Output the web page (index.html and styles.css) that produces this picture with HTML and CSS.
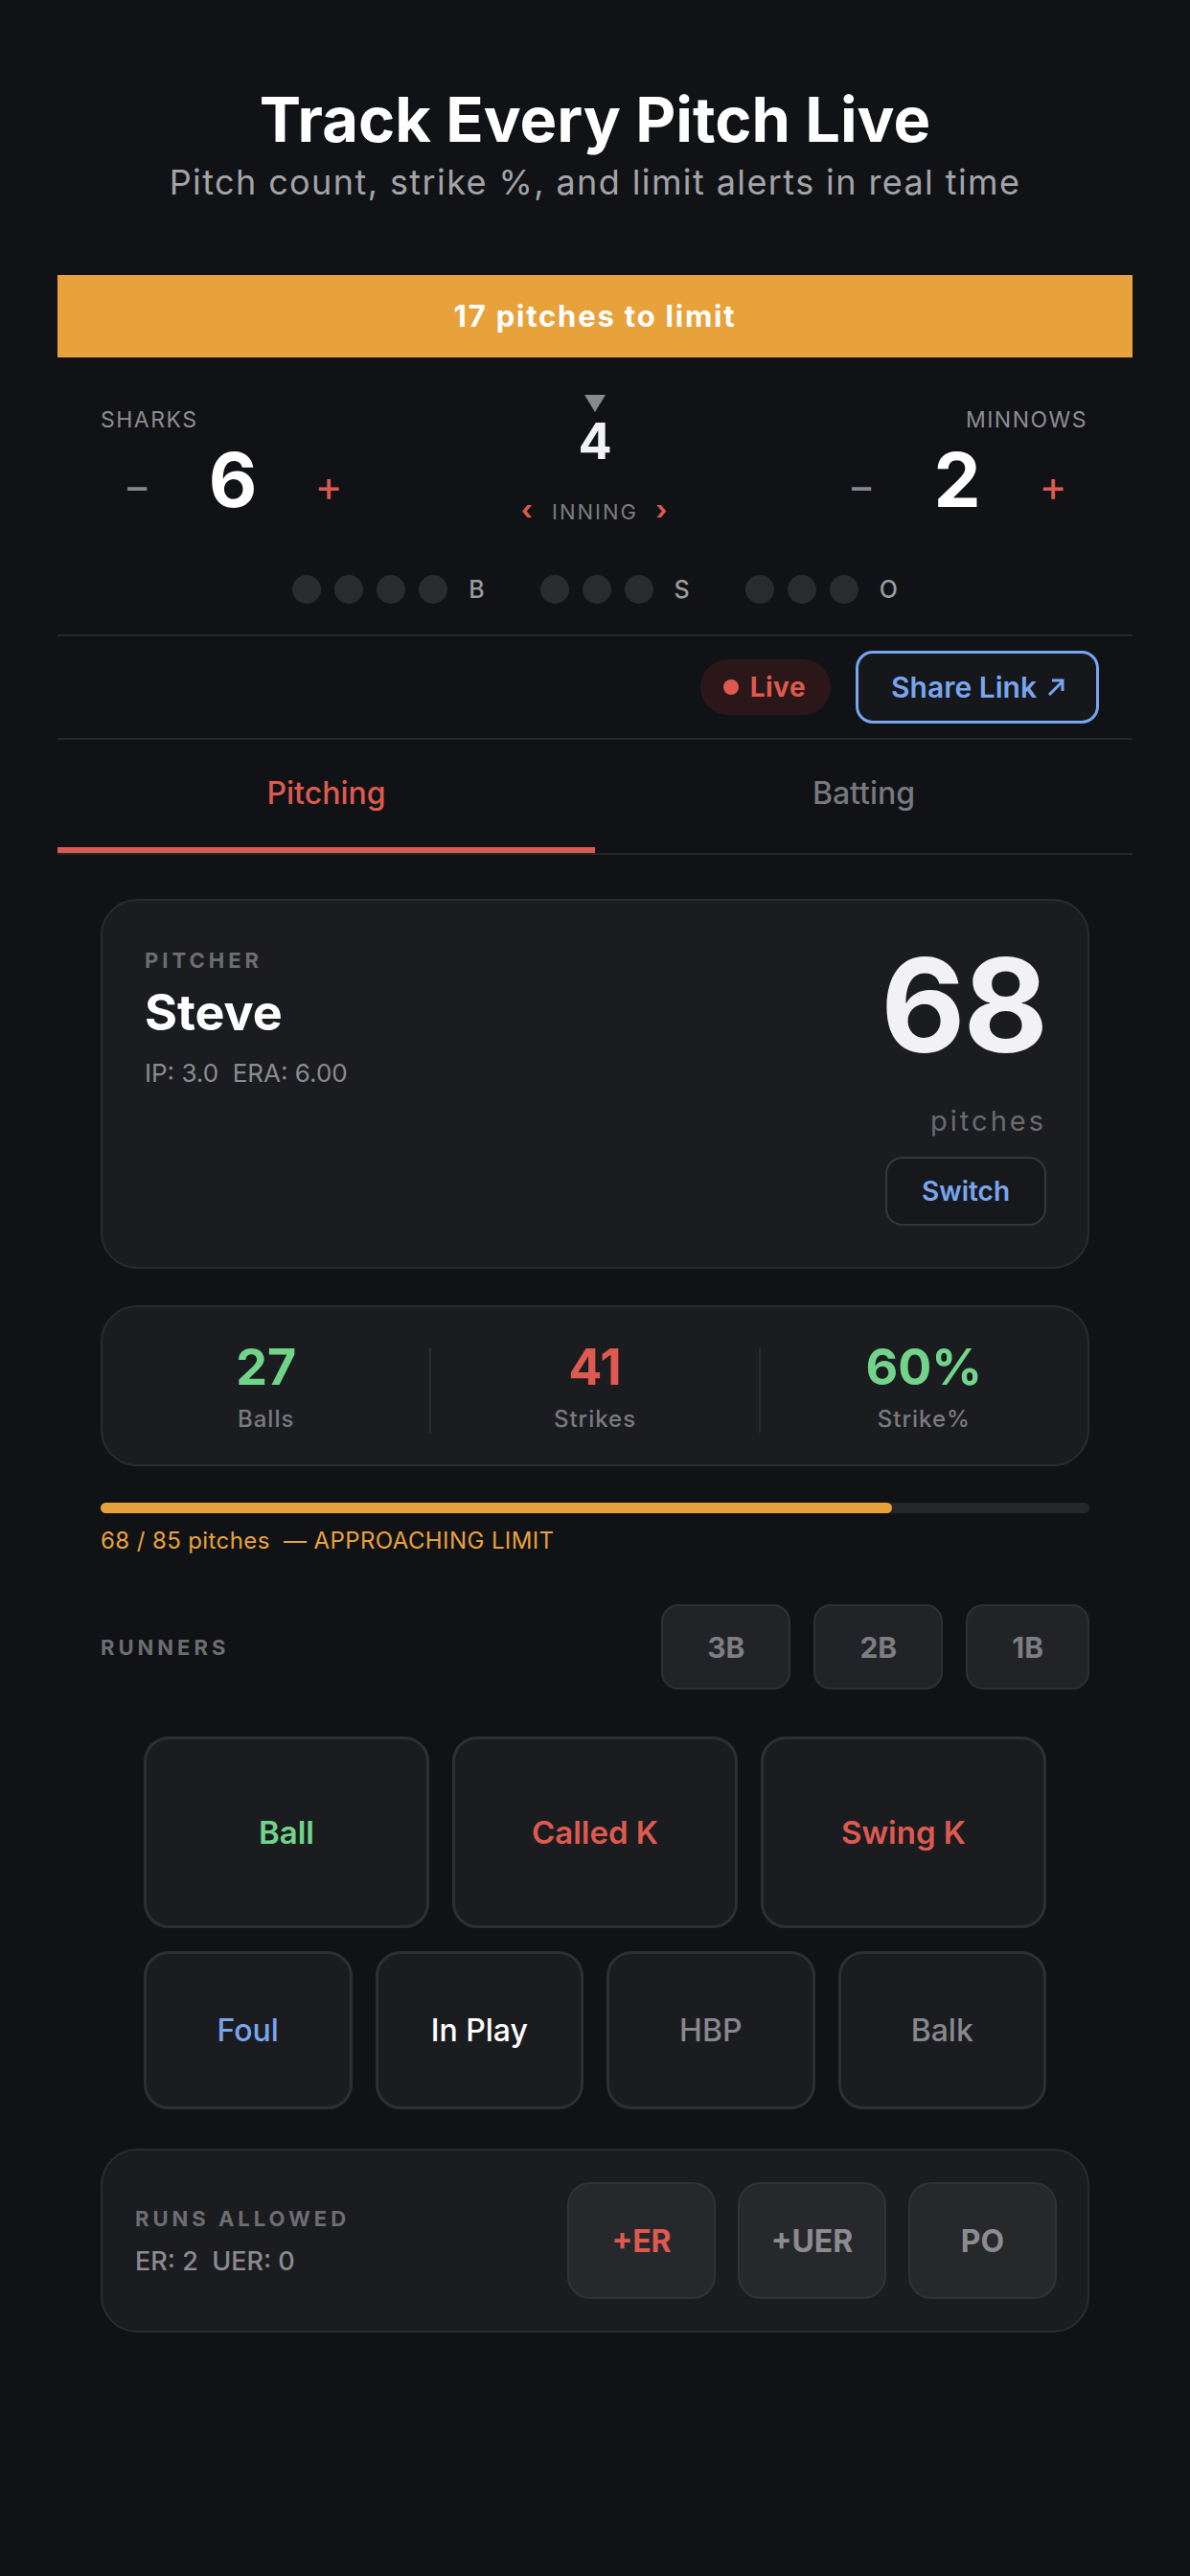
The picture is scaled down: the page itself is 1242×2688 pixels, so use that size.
FILE: index.html
```html
<!DOCTYPE html>
<html lang="en">
<head>
    <meta charset="UTF-8">
    <meta name="viewport" content="width=device-width, initial-scale=1.0">
    <title>Track Every Pitch Live</title>
    <link rel="stylesheet" href="styles.css">
</head>
<body>
    <header class="hero">
        <h1>Track Every Pitch Live</h1>
        <p>Pitch count, strike %, and limit alerts in real time</p>
    </header>

    <main class="app">
        <div class="limit-banner">17 pitches to limit</div>

        <section class="scoreboard">
            <div class="team">
                <div class="team-name">SHARKS</div>
                <div class="team-score">
                    <button class="step minus">−</button>
                    <span class="score">6</span>
                    <button class="step plus">+</button>
                </div>
            </div>
            <div class="inning">
                <svg class="half" width="22" height="18" viewBox="0 0 22 18"><polygon points="0,0 22,0 11,18" fill="#8a8a8e"/></svg>
                <div class="inning-num">4</div>
                <div class="inning-nav"><span class="chev">‹</span> INNING <span class="chev">›</span></div>
            </div>
            <div class="team right">
                <div class="team-name">MINNOWS</div>
                <div class="team-score">
                    <button class="step minus">−</button>
                    <span class="score">2</span>
                    <button class="step plus">+</button>
                </div>
            </div>
        </section>

        <div class="count-row">
            <div class="count"><i></i><i></i><i></i><i></i><b>B</b></div>
            <div class="count"><i></i><i></i><i></i><b>S</b></div>
            <div class="count"><i></i><i></i><i></i><b>O</b></div>
        </div>

        <div class="share-row">
            <span class="live"><span class="dot"></span>Live</span>
            <button class="share">Share Link
                <svg width="24" height="24" viewBox="0 0 24 24"><path d="M5 20 L18 7 M8 5 H19 V16" fill="none" stroke="currentColor" stroke-width="3"/></svg>
            </button>
        </div>

        <nav class="tabs">
            <div class="tab active">Pitching</div>
            <div class="tab">Batting</div>
        </nav>

        <div class="content">
            <section class="card pitcher">
                <div class="pitcher-info">
                    <div class="label">PITCHER</div>
                    <div class="pitcher-name">Steve</div>
                    <div class="pitcher-stats">IP: 3.0&nbsp; ERA: 6.00</div>
                </div>
                <div class="pitch-total">
                    <div class="big-count">68</div>
                    <div class="unit">pitches</div>
                    <button class="switch">Switch</button>
                </div>
            </section>

            <section class="card stats">
                <div class="stat"><div class="stat-val green">27</div><div class="stat-label">Balls</div></div>
                <div class="stat"><div class="stat-val red">41</div><div class="stat-label">Strikes</div></div>
                <div class="stat"><div class="stat-val green">60%</div><div class="stat-label">Strike%</div></div>
            </section>

            <div class="progress"><div class="progress-fill" style="width: 80%"></div></div>
            <div class="progress-text">68 / 85 pitches&nbsp; — APPROACHING LIMIT</div>

            <div class="runners">
                <div class="label">RUNNERS</div>
                <div class="bases">
                    <button class="base">3B</button>
                    <button class="base">2B</button>
                    <button class="base">1B</button>
                </div>
            </div>

            <div class="pitch-grid top">
                <button class="pitch green">Ball</button>
                <button class="pitch red">Called K</button>
                <button class="pitch red">Swing K</button>
            </div>
            <div class="pitch-grid bottom">
                <button class="pitch blue">Foul</button>
                <button class="pitch white">In Play</button>
                <button class="pitch gray">HBP</button>
                <button class="pitch gray">Balk</button>
            </div>

            <section class="card runs">
                <div class="runs-info">
                    <div class="label">RUNS ALLOWED</div>
                    <div class="runs-val">ER: 2&nbsp; UER: 0</div>
                </div>
                <div class="runs-actions">
                    <button class="run-btn red">+ER</button>
                    <button class="run-btn">+UER</button>
                    <button class="run-btn">PO</button>
                </div>
            </section>
        </div>
    </main>
</body>
</html>
```

FILE: styles.css
```css
body {
    margin: 0;
    background: #111216;
    color: #f2f2f4;
    font-family: Inter, "Open Sans", sans-serif;
}
button {
    font-family: inherit;
    cursor: pointer;
}
.hero {
    text-align: center;
    padding-top: 88px;
}
.hero h1 {
    margin: 0;
    font-size: 65px;
    line-height: 74px;
    font-weight: 700;
    letter-spacing: 0;
    color: #ffffff;
}
.hero p {
    margin: 6px 0 0;
    font-size: 36px;
    line-height: 44px;
    color: #a3a3a8;
    letter-spacing: 1.4px;
}
.app {
    margin: 75px 60px 0;
}
.limit-banner {
    background: #e8a23c;
    height: 86px;
    line-height: 86px;
    text-align: center;
    font-size: 31px;
    font-weight: 700;
    letter-spacing: 1.8px;
    color: #ffffff;
}

/* scoreboard */
.scoreboard {
    display: flex;
    justify-content: space-between;
    padding: 39px 45px 0;
}
.team {
    width: 276px;
    margin-top: 12px;
}
.team-name {
    font-size: 23px;
    line-height: 28px;
    letter-spacing: 1.5px;
    color: #8d8d92;
}
.team.right .team-name {
    text-align: right;
    padding-right: 2px;
}
.team-score {
    display: flex;
    align-items: center;
    margin-top: 9px;
    height: 80px;
}
.step {
    width: 76px;
    background: none;
    border: none;
    font-size: 44px;
    line-height: 44px;
    padding: 0;
    margin-top: 12px;
}
.step.minus { color: #86868b; }
.step.plus { color: #de5a50; }
.score {
    width: 124px;
    text-align: center;
    font-size: 78px;
    line-height: 80px;
    font-weight: 700;
    color: #ffffff;
}
.inning {
    display: flex;
    flex-direction: column;
    align-items: center;
}
.inning-num {
    margin-top: 3px;
    font-size: 52px;
    line-height: 56px;
    font-weight: 700;
}
.inning-nav {
    margin-top: 29px;
    font-size: 22px;
    line-height: 28px;
    letter-spacing: 2px;
    color: #7c7c81;
}
.chev {
    color: #de5a50;
    font-weight: 700;
    font-size: 28px;
    margin: 0 10px;
}
.count-row {
    display: flex;
    justify-content: center;
    gap: 58px;
    padding: 52px 0 32px;
    border-bottom: 2px solid #26272b;
}
.count {
    display: flex;
    align-items: center;
    gap: 14px;
}
.count i {
    width: 30px;
    height: 30px;
    border-radius: 50%;
    background: #2a2b2f;
}
.count b {
    margin-left: 8px;
    font-size: 25px;
    font-weight: 500;
    color: #9a9a9f;
}

/* share row */
.share-row {
    display: flex;
    justify-content: flex-end;
    align-items: center;
    gap: 26px;
    padding: 15px 35px 15px 0;
    border-bottom: 2px solid #26272b;
}
.live {
    display: flex;
    align-items: center;
    gap: 12px;
    height: 58px;
    padding: 0 26px 0 24px;
    border-radius: 29px;
    background: #2b1719;
    color: #de5a50;
    font-size: 28px;
    font-weight: 700;
    letter-spacing: 0.5px;
}
.live .dot {
    width: 16px;
    height: 16px;
    border-radius: 50%;
    background: #de5a50;
}
.share {
    display: flex;
    align-items: center;
    gap: 8px;
    height: 76px;
    padding: 0 30px 0 34px;
    background: #15171b;
    border: 3px solid #78a6ee;
    border-radius: 18px;
    color: #78a6ee;
    font-size: 30px;
    font-weight: 600;
}

/* tabs */
.tabs {
    display: flex;
    border-bottom: 2px solid #26272b;
}
.tab {
    flex: 1;
    text-align: center;
    height: 112px;
    line-height: 112px;
    font-size: 32px;
    font-weight: 500;
    color: #78787d;
    border-bottom: 6px solid transparent;
}
.tab.active {
    color: #de5a50;
    border-bottom-color: #de5a50;
}

/* main content */
.content {
    padding: 46px 45px 0;
}
.card {
    background: #1b1c20;
    border: 2px solid #2a2b2f;
    border-radius: 38px;
}
.label {
    font-size: 22px;
    line-height: 28px;
    font-weight: 700;
    letter-spacing: 4px;
    color: #6d6d72;
}
.pitcher {
    display: flex;
    justify-content: space-between;
    padding: 48px 43px 43px 44px;
}
.pitcher-name {
    margin-top: 11px;
    font-size: 52px;
    line-height: 60px;
    font-weight: 700;
    color: #ffffff;
}
.pitcher-stats {
    margin-top: 17px;
    font-size: 26px;
    line-height: 32px;
    color: #8b8b90;
}
.pitch-total {
    display: flex;
    flex-direction: column;
    align-items: flex-end;
}
.big-count {
    margin-top: -9px;
    font-size: 136px;
    line-height: 140px;
    font-weight: 700;
    letter-spacing: -2px;
    color: #f2f2f4;
}
.unit {
    margin-top: 34px;
    font-size: 29px;
    line-height: 34px;
    letter-spacing: 3px;
    color: #6b6b70;
}
.switch {
    margin-top: 20px;
    width: 168px;
    height: 72px;
    background: #17181c;
    border: 2px solid #36373b;
    border-radius: 18px;
    color: #78a6ee;
    font-size: 28px;
    font-weight: 600;
}
.stats {
    display: flex;
    margin-top: 38px;
    padding: 35px 0 29px;
}
.stat {
    flex: 1;
    text-align: center;
    border-left: 2px solid #2a2b2f;
    margin: 8px 0 4px;
}
.stat:first-child { border-left: none; }
.stat-val {
    margin-top: -8px;
    font-size: 52px;
    line-height: 56px;
    font-weight: 700;
}
.stat-label {
    margin-top: 12px;
    font-size: 24px;
    line-height: 28px;
    font-weight: 500;
    letter-spacing: 1px;
    color: #7a7a7f;
}
.green { color: #72d48a; }
.red { color: #de5a50; }
.blue { color: #78a6ee; }
.white { color: #ffffff; }
.gray { color: #88888d; }

.progress {
    margin-top: 38px;
    height: 11px;
    border-radius: 6px;
    background: #26272b;
}
.progress-fill {
    height: 100%;
    border-radius: 6px;
    background: #e8a23c;
}
.progress-text {
    margin-top: 15px;
    font-size: 24px;
    line-height: 28px;
    letter-spacing: 0.4px;
    color: #e8a23c;
}
.runners {
    display: flex;
    justify-content: space-between;
    align-items: center;
    margin-top: 52px;
}
.bases {
    display: flex;
    gap: 24px;
}
.base {
    height: 89px;
    padding: 0 46px;
    background: #222327;
    border: 2px solid #2f3034;
    border-radius: 18px;
    color: #7d7d82;
    font-size: 30px;
    font-weight: 700;
}
.pitch-grid {
    display: grid;
    gap: 24px;
    margin: 0 45px;
}
.pitch-grid.top {
    grid-template-columns: repeat(3, 1fr);
    margin-top: 49px;
}
.pitch-grid.bottom {
    grid-template-columns: repeat(4, 1fr);
    margin-top: 24px;
}
.pitch {
    background: #1b1c20;
    border: 3px solid #2e2f33;
    border-radius: 26px;
    font-size: 33px;
    font-weight: 600;
}
.pitch-grid.top .pitch { height: 200px; }
.pitch-grid.bottom .pitch {
    height: 165px;
    font-size: 32px;
    font-weight: 500;
}
.runs {
    display: flex;
    justify-content: space-between;
    align-items: center;
    margin-top: 41px;
    padding: 33px 32px 33px 34px;
}
.runs-val {
    margin-top: 15px;
    font-size: 27px;
    line-height: 32px;
    font-weight: 500;
    color: #8b8b90;
}
.runs-actions {
    display: flex;
    gap: 23px;
}
.run-btn {
    width: 155px;
    height: 122px;
    background: #27282c;
    border: 2px solid #313236;
    border-radius: 24px;
    color: #8b8b90;
    font-size: 32px;
    font-weight: 700;
}
.run-btn.red { color: #de5a50; }
```
